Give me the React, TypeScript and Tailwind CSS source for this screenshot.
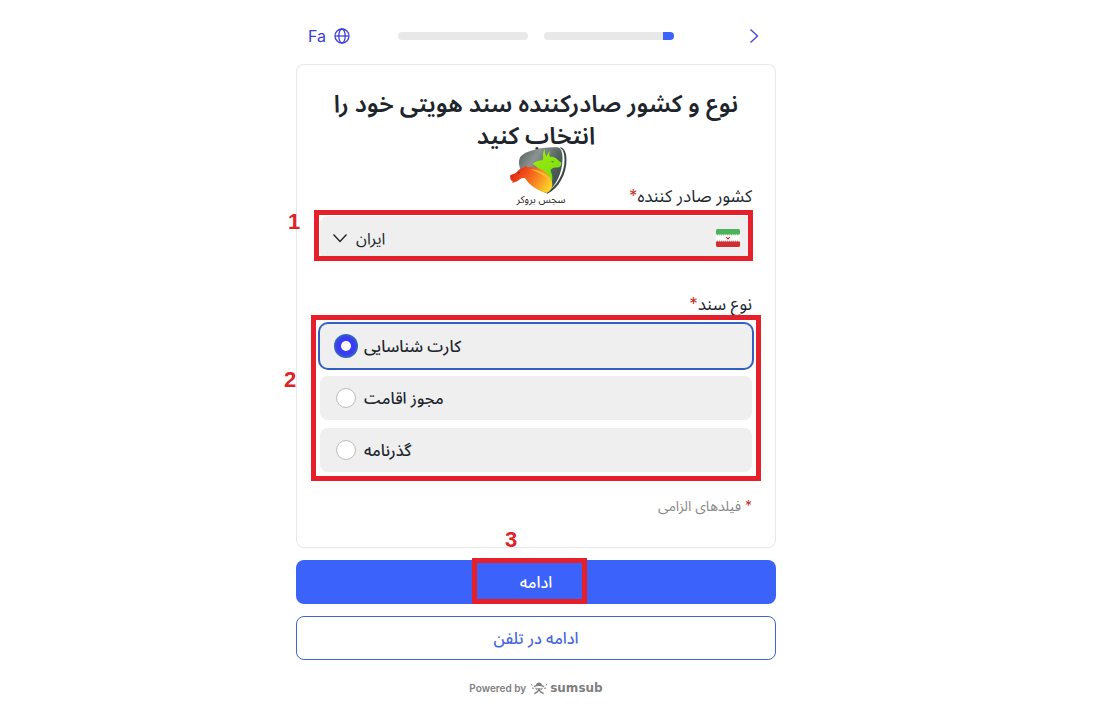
import { useState } from "react";
import clsx from "clsx";

type DocType = {
  id: string;
  label: string;
};

const DOC_TYPES: DocType[] = [
  { id: "id-card", label: "کارت شناسایی" },
  { id: "residence", label: "مجوز اقامت" },
  { id: "passport", label: "گذرنامه" },
];

function GlobeIcon() {
  return (
    <svg viewBox="0 0 16 16" className="h-4 w-4" fill="none" stroke="currentColor" strokeWidth="1.3">
      <circle cx="8" cy="8" r="7" />
      <ellipse cx="8" cy="8" rx="3.2" ry="7" />
      <path d="M1 8h14" />
    </svg>
  );
}

function IranFlag() {
  return (
    <svg viewBox="0 0 24 18" className="h-[18px] w-6">
      <rect width="24" height="18" rx="1.5" fill="#fff" />
      <path d="M1.5 0h21A1.5 1.5 0 0 1 24 1.5V5.5H0v-4A1.5 1.5 0 0 1 1.5 0z" fill="#4cb35a" />
      <path d="M0 12.5h24v4a1.5 1.5 0 0 1-1.5 1.5h-21A1.5 1.5 0 0 1 0 16.5z" fill="#cf2f33" />
      <path d="M1 5.8h22" stroke="#4cb35a" strokeWidth="0.8" strokeDasharray="1 1" />
      <path d="M1 12.2h22" stroke="#cf2f33" strokeWidth="0.8" strokeDasharray="1 1" />
      <path d="M10.2 8.2l1.800 1.800 1.800-1.800" stroke="#cf2f33" strokeWidth="1.2" fill="none" />
    </svg>
  );
}

// Shield with a bull (green) above a bear (red to yellow)
function BrokerLogo() {
  return (
    <div className="pointer-events-none flex flex-col items-center">
      <svg viewBox="0 0 204 160" className="h-[53px] w-[68px]">
        <defs>
          <linearGradient id="shield" x1="0" y1="0" x2="1" y2="0.7">
            <stop offset="0" stopColor="#4f5957" />
            <stop offset="0.35" stopColor="#8b9492" />
            <stop offset="0.7" stopColor="#52635f" />
            <stop offset="1" stopColor="#3d4d4a" />
          </linearGradient>
          <linearGradient id="bear" x1="0" y1="0.2" x2="1" y2="0.6">
            <stop offset="0" stopColor="#dd2010" />
            <stop offset="0.4" stopColor="#f2571c" />
            <stop offset="0.75" stopColor="#fa9a22" />
            <stop offset="1" stopColor="#fbd426" />
          </linearGradient>
          <linearGradient id="bull" x1="0" y1="0" x2="0.6" y2="1">
            <stop offset="0" stopColor="#a8ec0c" />
            <stop offset="1" stopColor="#6fdc10" />
          </linearGradient>
        </defs>
        <path
          d="M44 48C54 30 100 15 156 16c12 0 17 12 17 34 0 44-20 84-49 104C90 142 48 110 42 68c-1-8 0-14 2-20z"
          fill="url(#shield)"
        />
        <path
          d="M168 16c12 5 17 18 17 38 0 42-22 84-58 102l-4-2c32-20 56-58 56-100 0-20-4-32-14-37z"
          fill="#3b4745"
        />
        <path
          d="M82 66c10-8 20-11 30-11 3-3 3-8 2-14 0-8 2-14 5-21 0 10 2 18 6 24 2-8 5-13 10-17-3 8-2 14 1 18 10-1 18 4 24 10l9 7c2 5-1 11-6 14-6 1-11 0-16 2-8 3-11 6-9 12 6 12 6 26 0 38-4 8-8 13-14 18-2-34-14-64-42-80z"
          fill="url(#bull)"
        />
        <path d="M140 57l9 3-8 1z" fill="#2f5b18" />
        <path
          d="M15 101c6-4 13-5 18-8 6-8 14-15 24-17l4-5 7 5c30-2 57 10 69 34 10 18 6 34-12 44-30-8-52-24-64-44-9-3-15 0-21 6-6 3-10 6-15 6l-5 1 3-5c-5-1-8-5-8-11z"
          fill="url(#bear)"
        />
        <path d="M76 82c26 0 52 12 60 36-14-15-36-26-60-36z" fill="#fdc83a" opacity="0.7" />
        <path d="M37 93l8-3-5 6z" fill="#7d1208" />
      </svg>
      <span dir="rtl" className="-mt-0.5 pl-1 text-[10px] leading-3 text-[#222]">
        سجس بروکر
      </span>
    </div>
  );
}

function SumsubMark() {
  return (
    <svg viewBox="0 0 54 42" className="h-3.5 w-[18px]" fill="none" stroke="#808080" strokeWidth="4">
      <path d="M18 12C19 2 35 2 36 12z" fill="#808080" stroke="none" />
      <path d="M12 17c8-5 22-5 30 0" />
      <path d="M18 20v5l9-2 9 2v-5" strokeWidth="3" />
      <path d="M27 24l-4 8-10 6M27 24l4 8 10 6" />
      <path d="M3 10l4 3M51 10l-4 3M6 21l6 1M48 21l-6 1" strokeWidth="3" />
    </svg>
  );
}

function Highlight({ className }: { className: string }) {
  return <div className={clsx("pointer-events-none absolute border-5 border-[#e5202a]", className)} />;
}

function StepNumber({ value, className }: { value: number; className: string }) {
  return (
    <span
      className={clsx(
        "pointer-events-none absolute font-['Liberation_Sans',sans-serif] text-[22px] leading-6 font-bold text-[#dc2328]",
        className,
      )}
    >
      {value}
    </span>
  );
}

export default function App() {
  const [country, setCountry] = useState("ir");
  const [doc, setDoc] = useState("id-card");

  return (
    <div className="min-h-screen bg-white pt-2 pr-8 font-[Inter,'Noto_Sans_Arabic','DejaVu_Sans',sans-serif] text-[#20252c]">
      <main className="mx-auto w-full max-w-[480px]">
        <header className="grid h-14 grid-cols-[1fr_auto_1fr] items-center px-3 text-[#4040d8]">
          <button type="button" className="flex items-center gap-2 justify-self-start text-base">
            Fa
            <GlobeIcon />
          </button>
          <div className="flex gap-4">
            <div className="h-2 w-[130px] rounded-full bg-[#e8e8e8]" />
            <div className="flex h-2 w-[130px] justify-end overflow-hidden rounded-full bg-[#e8e8e8]">
              <div className="w-[11px] bg-[#3b63fb]" />
            </div>
          </div>
          <button type="button" aria-label="بازگشت" className="justify-self-end">
            <svg viewBox="0 0 20 20" className="h-5 w-5" fill="none" stroke="currentColor" strokeWidth="1.3">
              <path d="M6.500 3.500l7 6.500-7 6.500" />
            </svg>
          </button>
        </header>

        <form onSubmit={(e) => e.preventDefault()}>
          <section className="relative rounded-lg px-6 pt-6 pb-7 ring-1 ring-[#e8e8e8] ring-inset">
            <h1 dir="rtl" className="text-center text-2xl leading-8 font-semibold">
              نوع و کشور صادرکننده سند هویتی خود را انتخاب کنید
            </h1>
            <div className="absolute top-[78px] left-[209px]">
              <BrokerLogo />
            </div>

            <label htmlFor="country" dir="rtl" className="mt-8 block text-[17px] leading-6">
              کشور صادر کننده<span className="text-[#c9302c]">*</span>
            </label>
            <div className="relative mt-2">
              <select
                id="country"
                value={country}
                onChange={(e) => setCountry(e.target.value)}
                className="h-11 w-full appearance-none rounded-lg bg-[#efefef] px-9 text-left text-base"
              >
                <option value="ir">ایران</option>
              </select>
              <svg
                viewBox="0 0 16 16"
                className="pointer-events-none absolute top-3.5 left-3 h-4 w-4"
                fill="none"
                stroke="currentColor"
                strokeWidth="1.4"
              >
                <path d="M1.500 4.500L8 11.500l6.500-7" />
              </svg>
              <div className="pointer-events-none absolute top-[13px] right-3">
                <IranFlag />
              </div>
              <Highlight className="-top-1.5 -right-px -bottom-px -left-1.5" />
              <StepNumber value={1} className="-top-1.5 -left-8" />
            </div>

            <fieldset className="mt-8">
              <legend dir="rtl" className="w-full text-[17px] leading-6">
                نوع سند<span className="text-[#c9302c]">*</span>
              </legend>
              <div className="relative mt-2">
                <div className="space-y-2">
                  {DOC_TYPES.map((d) => (
                    <label
                      key={d.id}
                      className={clsx(
                        "flex h-11 items-center gap-2 rounded-lg bg-[#efefef] px-4 text-base font-medium",
                        doc === d.id && "ring-2 ring-[#315fc4]",
                      )}
                    >
                      <input
                        type="radio"
                        name="doc"
                        value={d.id}
                        checked={doc === d.id}
                        onChange={() => setDoc(d.id)}
                        className="h-5 w-5 shrink-0 appearance-none rounded-full border border-[#bdbdbd] bg-white checked:border-5 checked:border-[#3b3bf5] checked:ring-2 checked:ring-[#315fc4]"
                      />
                      {d.label}
                    </label>
                  ))}
                </div>
                <Highlight className="-inset-[9px]" />
                <StepNumber value={2} className="top-11 -left-9" />
              </div>
            </fieldset>

            <p dir="rtl" className="mt-5 text-sm leading-7 text-[#888]">
              <span className="text-[#c9302c]">*</span> فیلدهای الزامی
            </p>
          </section>

          <div className="relative mt-3">
            <button type="submit" className="h-11 w-full rounded-lg bg-[#3b63fb] text-base font-medium text-white">
              ادامه
            </button>
            <Highlight className="-top-0.5 bottom-0 left-44 w-[115px]" />
            <StepNumber value={3} className="-top-8 left-[209px]" />
          </div>
          <button
            type="button"
            className="mt-3 h-11 w-full rounded-lg border border-[#3f63cf] text-base font-medium text-[#4468dc]"
          >
            ادامه در تلفن
          </button>
        </form>

        <footer className="mt-4 flex items-center justify-center gap-1 text-[10px] leading-6 font-semibold text-[#808080]">
          Powered by
          <a
            href="#sumsub"
            className="flex items-center gap-0.5 font-['DejaVu_Sans',sans-serif] text-xs leading-6 font-bold"
          >
            <SumsubMark />
            sumsub
          </a>
        </footer>
      </main>
    </div>
  );
}
